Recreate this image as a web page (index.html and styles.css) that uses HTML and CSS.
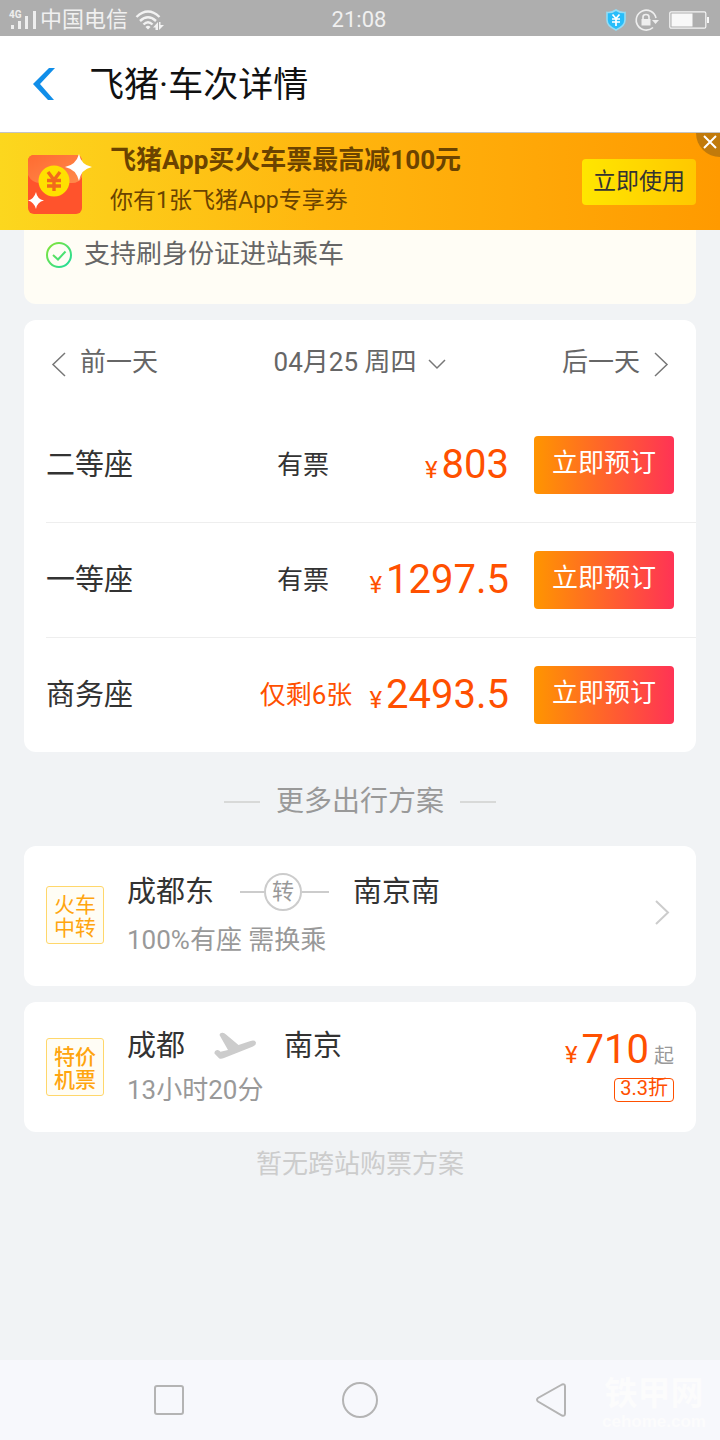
FILE: index.html
```html
<!DOCTYPE html>
<html lang="zh-CN">
<head>
<meta charset="utf-8">
<meta name="viewport" content="width=device-width, initial-scale=1">
<title>飞猪·车次详情</title>
<link rel="stylesheet" href="styles.css">
</head>
<body>
<div class="status">
  <div class="status-side">
    <svg width="28" height="20" viewBox="0 0 28 20" fill="#eeeeee" aria-hidden="true"><text class="net" x="0" y="8">4G</text><path d="M2 15h3v4H2zM9 11h3v8H9zM16 6h3v13h-3zM24 1h3v18h-3z"/></svg>
    <span>中国电信</span>
    <svg class="wifi" width="30" height="22" viewBox="0 0 30 22" fill="none" stroke="#f2f2f2" stroke-width="2.4" aria-hidden="true"><path d="M1.500 8q11.500-11 23 0M5 12q8-7.500 16 0M8.500 15.500q4.500-4.500 9 0"/><path d="M10.500 18q2.500-2.500 5 0L13 20.500zM18 18.500l5-5.500v8h-2.500v-2.500zM24 21v-8h1.500v3H29z" fill="#f2f2f2" stroke="none"/></svg>
  </div>
  <span>21:08</span>
  <div class="status-side status-end">
    <svg width="20" height="22" viewBox="0 0 20 22" aria-hidden="true"><path d="M10 1q4 3 9 2.500V11q0 6-9 10Q1 17 1 11V3.500Q6 4 10 1z" fill="#27bdfa" stroke="#92dcf6" stroke-width="1.600"/><path d="M6.500 5.500 10 9.500l3.500-4M6 10h8M6 13h8M10 9.500V17" fill="none" stroke="#fff" stroke-width="1.700"/></svg>
    <svg width="25" height="22" viewBox="0 0 25 22" fill="none" stroke="#eeeeee" stroke-width="1.600" aria-hidden="true"><path d="M21 9A10 10 0 1 0 18 18.500"/><path d="M17 11h7l-3.500 4z" fill="#eee" stroke="none"/><rect x="6.500" y="10" width="9" height="6.500" fill="#eee" stroke="none"/><path d="M8 10V8q0-2.500 3-2.500T14 8v2"/></svg>
    <svg width="40" height="18" viewBox="0 0 40 18" aria-hidden="true"><rect x=".8" y=".8" width="36" height="16.400" rx="1.500" fill="none" stroke="#f5f5f5" stroke-width="1.200"/><path d="M2.500 2.500h21v13h-21zM38 6h2v6h-2z" fill="#f8f8f8"/></svg>
  </div>
</div>
<header class="top">
  <button class="back" aria-label="返回"><svg width="22" height="32" viewBox="0 0 22 32"><path d="M0 16 16 0h6L7 16 21 32h-6z" fill="#108ee9"/></svg></button>
  <h1>飞猪·车次详情</h1>
</header>
<section class="banner">
  <svg width="66" height="62" viewBox="0 0 66 62" aria-hidden="true">
    <defs><linearGradient id="pk" x1="0" y1="0" x2="1" y2="1"><stop offset="0" stop-color="#ff6b31"/><stop offset="1" stop-color="#ff8a4c"/></linearGradient></defs>
    <rect x="0" y="2" width="54" height="59" rx="6" fill="#ff532c"/>
    <path d="M0 8q0-6 6-6h42q6 0 6 6v16q-3 6-10 6H12Q4 30 0 22z" fill="url(#pk)"/>
    <circle cx="26" cy="28" r="15.500" fill="#ffe000"/>
    <path d="m20 19 6 8 6-8M19 27.500h14M19 33h14M26 27v11" fill="none" stroke="#f26a1b" stroke-width="3.400"/>
    <path d="M51 1q2 11 13 13-11 2-13 14-3-12-14-14 11-2 14-13z" fill="#fff"/>
    <path d="M8 39q1 7 8 8.500-7 1.500-8 8.500-2-7-8-8.500Q6 46 8 39z" fill="#fff"/>
  </svg>
  <div class="banner-copy"><strong>飞猪App买火车票最高减100元</strong><span>你有1张飞猪App专享券</span></div>
  <button class="use">立即使用</button>
  <button class="close" aria-label="关闭"><svg width="14" height="14" viewBox="0 0 14 14"><path d="m1 1 12 12M13 1 1 13" stroke="#fff" stroke-width="2"/></svg></button>
</section>
<main>
  <section class="note">
    <svg width="26" height="26" viewBox="0 0 26 26" fill="none" stroke="url(#ok)" stroke-width="2" aria-hidden="true"><defs><linearGradient id="ok" gradientUnits="userSpaceOnUse" x1="0" y1="0" x2="26" y2="26"><stop stop-color="#8be52f"/><stop offset="1" stop-color="#18dca5"/></linearGradient></defs><circle cx="13" cy="13" r="12"/><path d="m7 13 5 4.500 7.500-8"/></svg>
    <span>支持刷身份证进站乘车</span>
  </section>
  <section class="card">
    <div class="days">
      <button class="day"><svg width="14" height="25" viewBox="0 0 14 25"><path d="M13 1 1 12.500 13 24"/></svg><span>前一天</span></button>
      <button class="day day-now"><span>04月25 周四</span><svg width="18" height="11" viewBox="0 0 18 11"><path d="m1 1 8 8 8-8"/></svg></button>
      <button class="day day-next"><span>后一天</span><svg width="14" height="25" viewBox="0 0 14 25"><path d="m1 1 12 11.500L1 24"/></svg></button>
    </div>
    <ul class="seats">
      <li><span class="seat">二等座</span><span class="left">有票</span><span class="price"><small>¥</small>803</span><button class="book">立即预订</button></li>
      <li><span class="seat">一等座</span><span class="left">有票</span><span class="price"><small>¥</small>1297.5</span><button class="book">立即预订</button></li>
      <li><span class="seat">商务座</span><span class="left few">仅剩6张</span><span class="price"><small>¥</small>2493.5</span><button class="book">立即预订</button></li>
    </ul>
  </section>
  <h2 class="more">更多出行方案</h2>
  <a class="card plan plan-train" href="#train">
    <span class="tag">火车中转</span>
    <span class="trip">
      <span class="route">成都东<span class="via"><span>转</span></span>南京南</span>
      <span class="detail">100%有座 需换乘</span>
    </span>
    <svg class="go" width="14" height="25" viewBox="0 0 14 25" aria-hidden="true"><path d="m1 1 12 11.500L1 24"/></svg>
  </a>
  <a class="card plan plan-flight" href="#flight">
    <span class="tag tag-bold">特价机票</span>
    <span class="trip">
      <span class="route">成都<svg class="plane" width="42" height="28" viewBox="0 0 42 28" aria-hidden="true"><path d="M5.500 3Q5.500 1 8 .7 10 .3 12 2.500L24.500 13l12-4q4-1.200 5.300 1 .8 3-2.800 4.500L10 26q-3 1.500-5 .3L.5 21.500Q0 18.500 3 18q2-.3 3.500 1.800L14 18z" fill="#cccccc"/></svg>南京</span>
      <span class="detail">13小时20分</span>
    </span>
    <span class="fare"><span class="price"><small>¥</small>710<em>起</em></span><span class="off">3.3折</span></span>
  </a>
  <p class="none">暂无跨站购票方案</p>
</main>
<nav class="keys">
  <button aria-label="最近任务"><svg width="30" height="30" viewBox="0 0 30 30"><rect x="1" y="1" width="28" height="28" rx="2"/></svg></button>
  <button aria-label="主屏幕"><svg width="36" height="36" viewBox="0 0 36 36"><circle cx="18" cy="18" r="17"/></svg></button>
  <button aria-label="后退"><svg width="32" height="36" viewBox="0 0 32 36"><path d="M27 2.500 3 16q-2 1.800 0 3.500L27 33.500q3 1 3-2V4.500q0-3-3-2z"/></svg></button>
  <div class="mark"><b>铁甲网</b><span>cehome.com</span></div>
</nav>
</body>
</html>
```

FILE: styles.css
```css
* { box-sizing: border-box; }

body {
  display: flex;
  flex-direction: column;
  min-height: 100vh;
  margin: 0;
  background: #f1f3f5;
  color: #333;
  font-family: Roboto, "Noto Sans CJK SC", sans-serif;
  font-size: 26px;
  line-height: 36px;
}

button {
  padding: 0;
  border: 0;
  background: none;
  color: inherit;
  font: inherit;
}

svg { display: block; flex: none; overflow: visible; }

.status {
  display: grid;
  grid-template-columns: 1fr auto 1fr;
  align-items: center;
  height: 36px;
  padding: 2px 11px 0 9px;
  background: #aeaeae;
  color: #f0f0f0;
  font-size: 22px;
}

.status-side { display: flex; align-items: center; gap: 3px; }
.status-end { justify-content: flex-end; gap: 9px; }
.wifi { margin-left: 4px; }
.net { font: bold 10px Roboto, sans-serif; }

.top {
  display: flex;
  align-items: center;
  gap: 34px;
  height: 97px;
  padding: 0 33px;
  border-bottom: 1px solid #c4c4c4;
  background: #fff;
}

.top h1 {
  margin: 0;
  padding-top: 4px;
  color: #111;
  font-size: 35px;
  font-weight: 400;
  line-height: 48px;
}

.banner {
  position: relative;
  display: flex;
  align-items: center;
  gap: 16px;
  height: 97px;
  padding: 0 24px 0 28px;
  overflow: hidden;
  background: linear-gradient(90deg, #fcd71e, #ffb60f 45%, #ff9a00);
}

.banner > svg { margin-top: 4px; }

.banner-copy {
  display: flex;
  flex: 1;
  flex-direction: column;
  gap: 5px;
  padding-bottom: 2px;
  color: #6b4300;
}

.banner-copy span { font-size: 23px; }

.use {
  width: 114px;
  height: 46px;
  border-radius: 4px;
  background: linear-gradient(90deg, #ffe600, #ffc800);
  font-size: 23px;
}

.close {
  position: absolute;
  top: -24px;
  right: -24px;
  display: grid;
  place-items: center;
  width: 48px;
  height: 48px;
  padding: 18px 20px 0 0;
  border-radius: 50%;
  background: #c17a0b;
}

main { flex: 1; padding: 0 24px; }

.note {
  display: flex;
  align-items: flex-start;
  gap: 12px;
  padding: 6px 22px 32px;
  border-radius: 0 0 12px 12px;
  background: #fffdf5;
  color: #666;
}

.note svg { margin-top: 6px; }

.card {
  margin-top: 16px;
  border-radius: 12px;
  background: #fff;
}

.days {
  display: grid;
  grid-template-columns: 1fr auto 1fr;
  height: 88px;
  padding: 0 28px;
  color: #666;
}

.day { display: flex; align-items: center; gap: 14px; }
.day-now { gap: 12px; }
.day-next { justify-content: flex-end; }
.day span { padding-bottom: 4px; }
.day path { fill: none; stroke: #777; stroke-width: 1.5; }

.seats { margin: 0; padding: 0 0 0 22px; list-style: none; }

.seats li {
  display: grid;
  grid-template-columns: 1fr 110px 152px 164px;
  align-items: center;
  padding: 28px 22px 28px 0;
}

.seats li + li { border-top: 1px solid #eee; }

.seat { font-size: 29px; }
.left { text-align: center; white-space: nowrap; }
.few { padding-left: 6px; color: #ff5000; }

.price {
  color: #ff5000;
  font-size: 40px;
  line-height: 48px;
  text-align: right;
  white-space: nowrap;
}

.seats .price { padding: 4px 1px 0 0; }
.price small { margin-right: 4px; font-size: 24px; }
.price em { margin-left: 5px; color: #999; font-size: 20px; font-style: normal; }

.book {
  height: 58px;
  margin-left: 24px;
  padding-bottom: 4px;
  border-radius: 4px;
  background: linear-gradient(90deg, #ff9500, #ff3355);
  color: #fff;
}

.more {
  display: flex;
  align-items: center;
  justify-content: center;
  gap: 16px;
  margin: 0;
  padding: 32px 0 10px;
  color: #999;
  font-size: 28px;
  font-weight: 400;
}

.more::before,
.more::after {
  width: 36px;
  height: 2px;
  background: #d8d9d8;
  content: "";
}

.plan {
  display: flex;
  align-items: center;
  gap: 23px;
  padding: 0 22px;
  color: inherit;
  text-decoration: none;
}

.plan-train { min-height: 140px; padding-bottom: 2px; }
.plan-flight { min-height: 130px; }

.tag {
  width: 58px;
  height: 58px;
  padding: 7px;
  border: 1px solid #ffd76b;
  border-radius: 3px;
  background: #fffdf5;
  color: #ffa50f;
  font-size: 21px;
  line-height: 23px;
}

.tag-bold { font-weight: 500; }

.trip { display: flex; flex: 1; flex-direction: column; }
.plan-train .trip { gap: 10px; }
.plan-flight .trip { gap: 6px; }

.route { display: flex; align-items: center; font-size: 29px; line-height: 40px; }
.detail { color: #999; }

.via { display: flex; align-items: center; margin: 0 24px 0 26px; }

.via span {
  width: 38px;
  height: 38px;
  border: 2px solid #ccc;
  border-radius: 50%;
  color: #999;
  font-size: 22px;
  line-height: 33px;
  text-align: center;
}

.via::before,
.via::after {
  width: 24px;
  height: 2px;
  background: #ccc;
  content: "";
}

.via::after { width: 27px; }

.plane { margin: 0 28px 0 29px; }
.go { margin: 0 5px 6px 0; }
.go path { fill: none; stroke: #ccc; stroke-width: 2; }

.fare { display: flex; flex-direction: column; align-items: flex-end; }
.fare .price { line-height: 44px; }

.off {
  height: 24px;
  padding: 0 5px;
  border: 1px solid #ff5000;
  border-radius: 4px;
  color: #ff5000;
  font-size: 20px;
  line-height: 18px;
}

.plan-flight .fare { padding-bottom: 4px; }

.none { margin: 0; padding: 14px 0; color: #ccc; text-align: center; }

.keys {
  position: relative;
  display: grid;
  grid-template-columns: repeat(3, 1fr);
  height: 80px;
  padding: 0 74px;
  background: #f7f8fc;
}

.keys button { display: grid; place-items: center; }
.keys svg { fill: none; stroke: #b4b4b4; stroke-width: 2; }

.mark {
  position: absolute;
  right: 14px;
  bottom: 8px;
  display: flex;
  flex-direction: column;
  align-items: center;
  color: #fcfcfc;
  font-size: 33px;
  line-height: 36px;
}

.mark span { font: bold 17px/20px "Liberation Sans", sans-serif; }
```
